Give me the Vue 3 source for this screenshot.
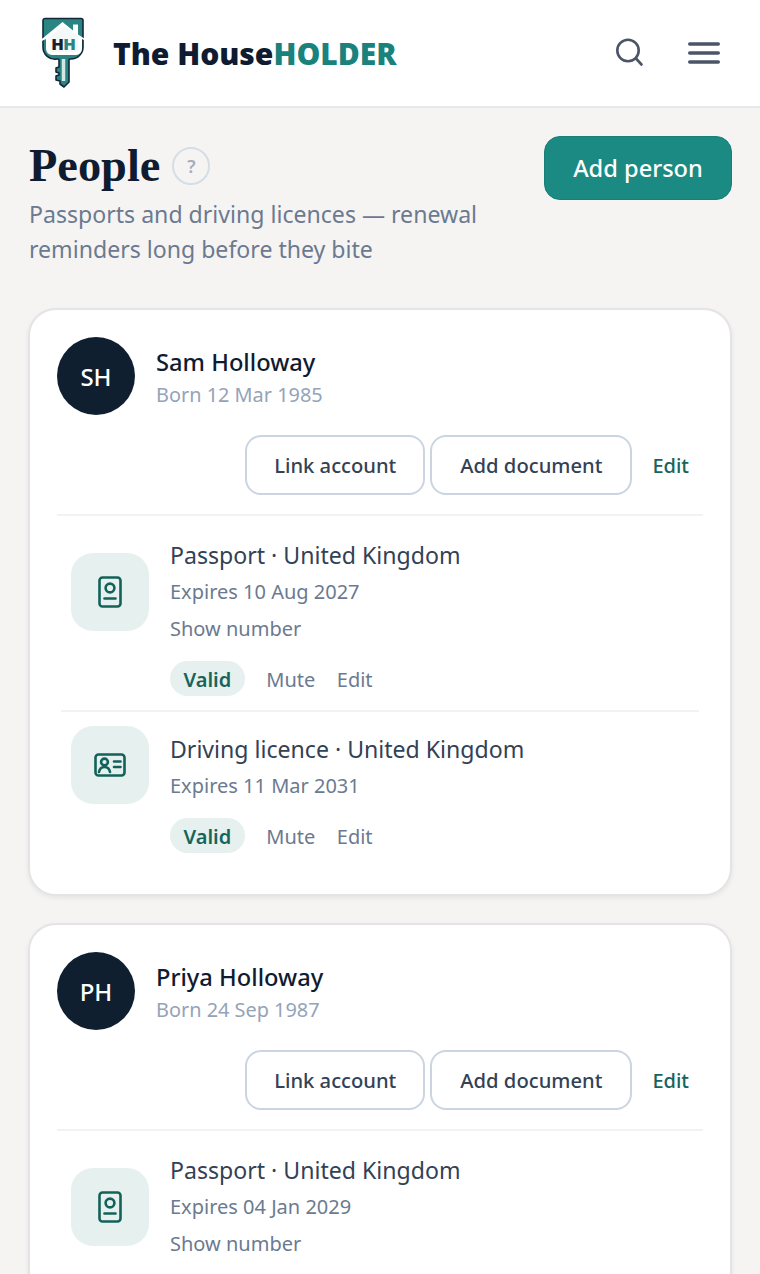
<template>
  <div class="page">
    <header class="topbar">
      <div class="brand">
        <svg class="logo" width="50" height="72" viewBox="0 0 50 72">
          <path d="M6 1.500h36a2 2 0 0 1 2 2V30a12 12 0 0 1-12 12h-1a1 1 0 0 0-1 1v22l-5 5-4-3v-3l-4-1v-4l3-1v-2l-3-1v-4l3-1V43a1 1 0 0 0-1-1h-1A12 12 0 0 1 4 30V3.500a2 2 0 0 1 2-2z" fill="#2a8582" stroke="#12283a" stroke-width="1.600" stroke-linejoin="round" />
          <path d="M1 23.500 23.500 5 34 13.500V7.500h5v10l9.500 6-.8 1L43 22v10a6 6 0 0 1-6 6H13a6 6 0 0 1-6-6V22l-5.300 2.500z" fill="#fff" />
          <path d="M11 19v13a3 3 0 0 0 3 3h22a3 3 0 0 0 3-3V19L25 9z" fill="#f4f9f8" />
          <path d="M24.500 42v22" stroke="#d3e8e5" stroke-width="3.500" />
          <text x="18.500" y="33" class="logo-h dark" text-anchor="middle">H</text>
          <text x="30.500" y="33" class="logo-h teal" text-anchor="middle">H</text>
        </svg>
        <span class="wordmark">The House<span class="wordmark-accent">HOLDER</span></span>
      </div>
      <div class="top-actions">
        <svg class="icon-search" width="30" height="30" viewBox="0 0 30 30" fill="none" stroke="#4a5568" stroke-width="2.600" stroke-linecap="round">
          <circle cx="14" cy="12.500" r="10.700" />
          <path d="M22 20.500 27.500 26.500" />
        </svg>
        <svg class="icon-menu" width="32" height="24" viewBox="0 0 32 24" fill="none" stroke="#4a5568" stroke-width="3.400" stroke-linecap="round">
          <path d="M1.700 3h28.600M1.700 12h28.600M1.700 21h28.600" />
        </svg>
      </div>
    </header>

    <main class="content">
      <section class="page-head">
        <div class="page-head-text">
          <div class="title-row">
            <h1>People</h1>
            <span class="help">?</span>
          </div>
          <p>Passports and driving licences — renewal reminders long before they bite</p>
        </div>
        <button class="btn-primary">Add person</button>
      </section>

      <article v-for="person in people" :key="person.initials" class="card">
        <div class="person">
          <div class="avatar">{{ person.initials }}</div>
          <div class="person-text">
            <h2>{{ person.name }}</h2>
            <div class="born">Born {{ person.born }}</div>
          </div>
        </div>
        <div class="person-actions">
          <button class="btn-outline">Link account</button>
          <button class="btn-outline">Add document</button>
          <a class="edit-link">Edit</a>
        </div>
        <div class="docs">
          <div v-for="doc in person.docs" :key="doc.title" class="doc">
            <div class="doc-icon">
              <svg v-if="doc.kind === 'passport'" width="24" height="32" viewBox="0 0 24 32" fill="none" stroke="#13625a" stroke-width="2.600" stroke-linecap="round">
                <rect x="1.500" y="1.500" width="21" height="29" rx="3" />
                <circle cx="12" cy="12" r="4.400" />
                <path d="M6.500 22.500h11" />
              </svg>
              <svg v-else width="32" height="24" viewBox="0 0 32 24" fill="none" stroke="#13625a" stroke-width="2.600" stroke-linecap="round">
                <rect x="1.500" y="1.500" width="29" height="21" rx="3" />
                <circle cx="10.500" cy="9" r="3.400" />
                <path d="M5 19c.6-3.400 2.600-5 5.500-5s4.900 1.600 5.500 5M20 8.500h6.500M20 14h6.500" />
              </svg>
            </div>
            <div class="doc-body">
              <div class="doc-title">{{ doc.title }}</div>
              <div class="doc-meta">Expires {{ doc.expires }}</div>
              <div v-if="doc.kind === 'passport'" class="doc-meta show">Show number</div>
              <div class="doc-status">
                <span class="badge">Valid</span>
                <a>Mute</a>
                <a>Edit</a>
              </div>
            </div>
          </div>
        </div>
      </article>
    </main>
  </div>
</template>

<script setup>
const people = [
  {
    initials: 'SH',
    name: 'Sam Holloway',
    born: '12 Mar 1985',
    docs: [
      { kind: 'passport', title: 'Passport · United Kingdom', expires: '10 Aug 2027' },
      { kind: 'licence', title: 'Driving licence · United Kingdom', expires: '11 Mar 2031' },
    ],
  },
  {
    initials: 'PH',
    name: 'Priya Holloway',
    born: '24 Sep 1987',
    docs: [
      { kind: 'passport', title: 'Passport · United Kingdom', expires: '04 Jan 2029' },
    ],
  },
];
</script>

<style>
body {
  background: #f5f4f2;
}
</style>

<style scoped>
.page {
  height: 100vh;
  overflow: hidden;
  font-family: "Noto Sans", sans-serif;
  background: #f5f4f2;
  color: #334155;
}

.topbar {
  height: 108px;
  box-sizing: border-box;
  background: #fff;
  border-bottom: 2px solid #e8e8ea;
  display: flex;
  align-items: center;
  justify-content: space-between;
  padding: 0 40px 0 39px;
}

.brand {
  display: flex;
  align-items: center;
  gap: 24px;
}

.logo {
  display: block;
}

.logo-h {
  font-family: "Noto Sans", sans-serif;
  font-weight: 900;
  font-size: 16.500px;
}

.dark {
  fill: #1a202c;
}

.teal {
  fill: #2a8582;
}

.wordmark {
  font-size: 30px;
  font-weight: 900;
  color: #0f1b30;
}

.wordmark-accent {
  color: #1a827c;
}

.top-actions {
  display: flex;
  align-items: center;
  gap: 44px;
}

.content {
  padding: 28px 28px 0;
}

.page-head {
  display: flex;
  justify-content: space-between;
  align-items: flex-start;
  margin-bottom: 41px;
}

.page-head-text {
  width: 480px;
  padding-left: 1px;
}

.title-row {
  display: flex;
  align-items: center;
  gap: 12px;
  margin-bottom: 1px;
}

h1 {
  margin: 0;
  font-family: "Liberation Serif", serif;
  font-size: 46.400px;
  line-height: 60px;
  font-weight: 700;
  color: #0f1b30;
}

.help {
  width: 38px;
  height: 38px;
  box-sizing: border-box;
  border: 2px solid #d5dde5;
  border-radius: 50%;
  display: flex;
  align-items: center;
  justify-content: center;
  font-size: 18px;
  font-weight: 600;
  color: #a0aec0;
}

.page-head p {
  margin: 0;
  font-size: 23.100px;
  line-height: 35px;
  color: #6b7a90;
}

.btn-primary {
  height: 64px;
  width: 188px;
  border: 1px solid #1a7f78;
  border-radius: 16px;
  background: #1a8a82;
  color: #fff;
  font-family: inherit;
  font-size: 23.600px;
  font-weight: 500;
}

.card {
  background: #fff;
  border: 2px solid #e4e4e6;
  border-radius: 28px;
  padding: 27px;
  margin-bottom: 27px;
  box-shadow: 0 2px 5px rgba(20, 30, 50, 0.07);
}

.person {
  display: flex;
  align-items: center;
  gap: 21px;
}

.avatar {
  width: 78px;
  height: 78px;
  border-radius: 50%;
  background: #0f1f30;
  color: #fff;
  display: flex;
  align-items: center;
  justify-content: center;
  font-size: 24px;
  font-weight: 500;
}

.person-text {
  margin-top: 4px;
}

h2 {
  margin: 0;
  font-size: 23.700px;
  line-height: 33px;
  font-weight: 500;
  color: #0f1b30;
}

.born {
  font-size: 19.900px;
  line-height: 32px;
  color: #94a3b8;
}

.person-actions {
  display: flex;
  justify-content: flex-end;
  align-items: center;
  gap: 5px;
  margin-top: 20px;
  padding: 0 14px 19px 0;
  border-bottom: 2px solid #f1f2f3;
}

.btn-outline {
  height: 60px;
  padding: 0 28px;
  border: 2px solid #cbd5e1;
  border-radius: 16px;
  background: #fff;
  color: #334155;
  font-family: inherit;
  font-size: 20.200px;
  font-weight: 500;
}

.btn-outline:first-child {
  padding: 0 27px;
}

.edit-link {
  margin-left: 15px;
  font-size: 20px;
  font-weight: 500;
  color: #17645c;
}

.docs {
  padding: 0 4px;
}

.doc {
  display: flex;
  gap: 21px;
  padding: 14px 10px;
  border-bottom: 2px solid #f1f2f3;
}

.doc:last-child {
  border-bottom: 0;
}

.doc:first-child {
  padding-top: 22px;
}

.doc:first-child .doc-icon {
  margin-top: 15px;
}

.doc:not(:first-child) .doc-body {
  margin-top: 6px;
}

.doc-icon {
  width: 78px;
  height: 78px;
  flex: none;
  border-radius: 22px;
  background: #e6f1ef;
  display: flex;
  align-items: center;
  justify-content: center;
}

.doc-title {
  font-size: 23.100px;
  line-height: 34px;
  color: #334155;
}

.doc-meta {
  margin-top: 4px;
  font-size: 20px;
  line-height: 32px;
  color: #6b7a90;
}

.doc-meta.show {
  margin-top: 5px;
}

.doc-status {
  display: flex;
  align-items: center;
  margin-top: 16px;
  font-size: 20px;
  color: #6b7a90;
}

.doc-status a {
  margin-left: 21.500px;
  padding-top: 2px;
}

.badge {
  box-sizing: border-box;
  height: 35px;
  padding: 2px 13.500px 0;
  border-radius: 18px;
  background: #e6f1ef;
  color: #17645c;
  font-weight: 600;
  display: flex;
  align-items: center;
}
</style>
